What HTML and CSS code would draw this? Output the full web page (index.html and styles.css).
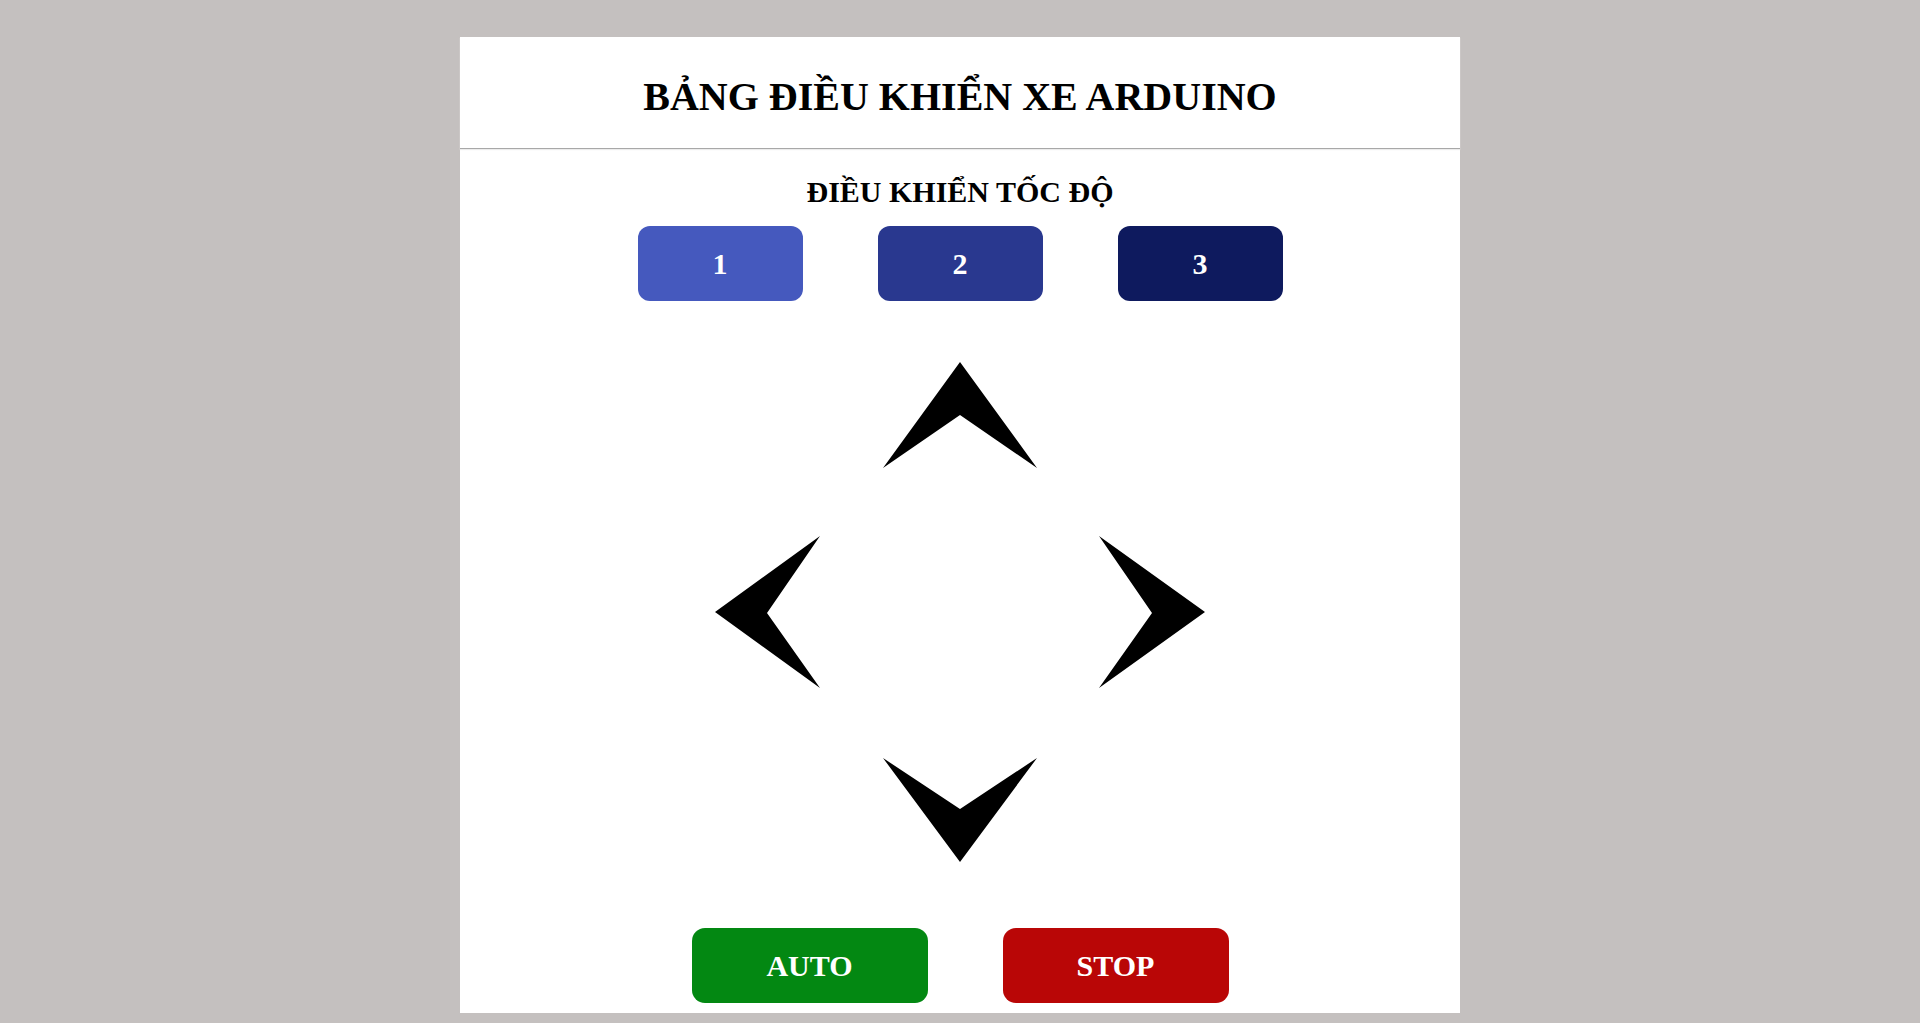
FILE: index.html
```html
<!DOCTYPE html>
<html lang="vi">
<head>
<meta charset="utf-8">
<title>Bảng điều khiển xe Arduino</title>
<link rel="stylesheet" href="styles.css">
</head>
<body>
<main class="panel">
  <header class="panel-header">
    <h1 class="title">BẢNG ĐIỀU KHIỂN XE ARDUINO</h1>
  </header>
  <section class="speed">
    <h2 class="speed-title">ĐIỀU KHIỂN TỐC ĐỘ</h2>
    <div class="speed-buttons">
      <button class="btn speed-btn s1">1</button>
      <button class="btn speed-btn s2">2</button>
      <button class="btn speed-btn s3">3</button>
    </div>
  </section>
  <section class="dpad">
    <div class="cell"></div>
    <button class="cell arrow" aria-label="Tiến">
      <svg viewBox="0 0 192 197" width="192" height="197"><polygon points="96,45 19,151 96,98 173,151"/></svg>
    </button>
    <div class="cell"></div>
    <button class="cell arrow" aria-label="Trái">
      <svg viewBox="0 0 192 197" width="192" height="197"><polygon points="43,98 148,22 95,99 148,174"/></svg>
    </button>
    <div class="cell"></div>
    <button class="cell arrow" aria-label="Phải">
      <svg viewBox="0 0 192 197" width="192" height="197"><polygon points="149,98 43,22 96,99 43,174"/></svg>
    </button>
    <div class="cell"></div>
    <button class="cell arrow" aria-label="Lùi">
      <svg viewBox="0 0 192 197" width="192" height="197"><polygon points="96,151 19,47 96,98 173,47"/></svg>
    </button>
    <div class="cell"></div>
  </section>
  <section class="modes">
    <button class="btn mode-btn auto">AUTO</button>
    <button class="btn mode-btn stop">STOP</button>
  </section>
</main>
</body>
</html>
```
FILE: styles.css
```css
html, body {
  margin: 0;
  padding: 0;
}
body {
  background: #c4c0bf;
  font-family: "Liberation Serif", "Times New Roman", serif;
  overflow: hidden;
}
.panel {
  width: 1000px;
  margin: 37px auto 10px;
  background: #ffffff;
  padding-bottom: 10px;
  display: flex;
  flex-direction: column;
  align-items: center;
}
.panel-header {
  align-self: stretch;
  padding: 37px 0 28px;
  border-bottom: 1px solid #a8a8a8;
  box-shadow: 0 1px 1px #ececec;
  text-align: center;
}
.title {
  margin: 0;
  font-size: 40px;
  line-height: 46px;
  font-weight: bold;
  color: #000;
}
.speed {
  display: flex;
  flex-direction: column;
  align-items: center;
  margin-top: 26px;
}
.speed-title {
  margin: 0;
  font-size: 30px;
  line-height: 34px;
  font-weight: bold;
  color: #000;
}
.speed-buttons {
  display: flex;
  gap: 75px;
  margin-top: 17px;
}
.btn {
  border: none;
  color: #fff;
  font-family: "Liberation Serif", "Times New Roman", serif;
  font-weight: bold;
  font-size: 30px;
  height: 75px;
  border-radius: 12px;
  padding: 0;
  cursor: pointer;
}
.speed-btn {
  width: 165px;
}
.s1 { background: #4559be; }
.s2 { background: #29388f; }
.s3 { background: #0e1a5e; }
.dpad {
  display: grid;
  grid-template-columns: repeat(3, 192px);
  grid-template-rows: repeat(3, 197px);
  margin-top: 16px;
}
.cell {
  width: 192px;
  height: 197px;
}
.arrow {
  border: none;
  background: transparent;
  padding: 0;
  display: block;
  cursor: pointer;
}
.arrow svg {
  display: block;
  fill: #000;
}
.modes {
  display: flex;
  gap: 75px;
  margin-top: 20px;
}
.mode-btn {
  border-radius: 13px;
}
.auto {
  width: 236px;
  background: #038812;
}
.stop {
  width: 226px;
  background: #b90606;
}
```
